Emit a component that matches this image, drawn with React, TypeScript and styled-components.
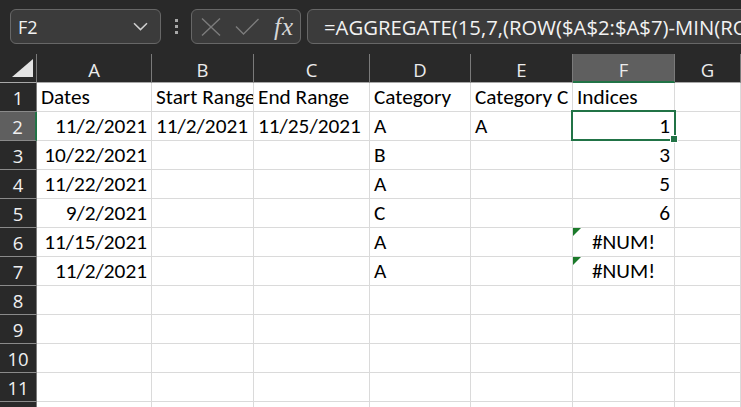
import React from "react";
import styled, { createGlobalStyle } from "styled-components";

const GlobalStyle = createGlobalStyle`
    html, body {
        margin: 0;
        padding: 0;
        background: #292929;
        overflow: hidden;
    }
    * {
        box-sizing: border-box;
    }
`;

const UI_FONT = `"Open Sans", "Noto Sans", sans-serif`;
const CELL_FONT = `Carlito, Lato, "Open Sans", sans-serif`;

const SWindow = styled.div`
    width: 741px;
    height: 407px;
    overflow: hidden;
    background: #292929;
`;

const SFormulaBar = styled.div`
    display: flex;
    align-items: flex-start;
    height: 54px;
    padding: 9px 0 0 10px;
`;

const SBox = styled.div`
    display: flex;
    flex-shrink: 0;
    align-items: center;
    height: 35px;
    border: 1px solid #676767;
    border-radius: 6px;
    background: #3b3b3b;
    color: #f2f2f2;
    font-family: ${UI_FONT};
    font-size: 18px;
`;

const SNameBox = styled(SBox)`
    width: 151px;
    justify-content: space-between;
    padding: 0 12px 0 7px;
`;

const SGrip = styled.div`
    flex-shrink: 0;
    width: 30px;
    height: 35px;
    display: flex;
    flex-direction: column;
    align-items: center;
    justify-content: center;
    gap: 3px;

    span {
        width: 3px;
        height: 3px;
        background: #a8a8a8;
    }
`;

const SFxBox = styled(SBox)`
    width: 110px;
    padding: 0 6px 0 9px;
    gap: 14px;
`;

const SFx = styled.span`
    font-family: "Liberation Serif", "DejaVu Serif", serif;
    font-style: italic;
    font-size: 25px;
    line-height: 1;
    color: #d6d6d6;
    margin-left: auto;
    letter-spacing: 1px;
`;

const SFormulaBox = styled(SBox)`
    width: 470px;
    margin-left: 6px;
    padding-left: 16px;
    white-space: nowrap;
    overflow: hidden;
    font-size: 20.3px;
`;

const COLS = [115, 102, 116, 101, 102, 102];

const SSheet = styled.div`
    display: grid;
    grid-template-columns: 37px ${COLS.map((w) => `${w}px`).join(" ")} 1fr;
    grid-auto-rows: 29px;
`;

const SCorner = styled.div`
    background: #292929;
    border-right: 1px solid #7a7a7a;
    border-bottom: 1px solid #a8a8a8;
    display: flex;
    align-items: flex-end;
    justify-content: flex-end;
    padding: 0 3px 5px 0;
`;

const SColHead = styled.div<{ $active?: boolean }>`
    display: flex;
    align-items: center;
    justify-content: center;
    padding-top: 3px;
    background: ${(p) => (p.$active ? "#5f5f5f" : "#292929")};
    border-right: 1px solid #7a7a7a;
    border-bottom: ${(p) => (p.$active ? "2px solid #217346" : "1px solid #a8a8a8")};
    color: #ececec;
    font-family: ${UI_FONT};
    font-size: 18.5px;
`;

const SRowHead = styled.div<{ $active?: boolean }>`
    display: flex;
    align-items: center;
    justify-content: center;
    background: ${(p) => (p.$active ? "#5f5f5f" : "#292929")};
    border-right: ${(p) => (p.$active ? "2px solid #217346" : "1px solid #7a7a7a")};
    border-bottom: 1px solid #8a8a8a;
    color: #f0f0f0;
    font-family: ${UI_FONT};
    font-size: 18.5px;
`;

const SCell = styled.div<{ $align?: "left" | "right" | "center" }>`
    position: relative;
    background: #ffffff;
    border-right: 1px solid #dadada;
    border-bottom: 1px solid #dadada;
    padding: 0 4px 0 4px;
    line-height: 28px;
    font-family: ${CELL_FONT};
    font-size: 21.3px;
    color: #000;
    white-space: nowrap;
    overflow: hidden;
    text-align: ${(p) => p.$align || "left"};
`;

const SSelection = styled.div`
    position: absolute;
    left: -2px;
    top: -2px;
    right: -2px;
    bottom: -1px;
    border: 2px solid #217346;
    pointer-events: none;

    &::after {
        content: "";
        position: absolute;
        right: -4px;
        bottom: -4px;
        width: 6px;
        height: 6px;
        background: #217346;
        border: 1px solid #ffffff;
    }
`;

const SErrorFlag = styled.span`
    position: absolute;
    left: 0;
    top: 0;
    width: 0;
    height: 0;
    border-top: 8px solid #1b7a2a;
    border-right: 8px solid transparent;
`;

const SActiveWrap = styled.div`
    position: relative;
    overflow: visible;
    z-index: 2;
`;

type Align = "left" | "right" | "center";
interface ICell {
    text?: string;
    align?: Align;
    error?: boolean;
}

const r = (text: string): ICell => ({ text, align: "right" });
const l = (text: string): ICell => ({ text, align: "left" });
const e: ICell = {};
const err: ICell = { text: "#NUM!", align: "center", error: true };
const blank: ICell[] = [e, e, e, e, e, e, e];

const ROWS: ICell[][] = [
    [l("Dates"), l("Start Range"), l("End Range"), l("Category"), l("Category C"), l("Indices"), e],
    [r("11/2/2021"), l("11/2/2021"), l("11/25/2021"), l("A"), l("A"), r("1"), e],
    [r("10/22/2021"), e, e, l("B"), e, r("3"), e],
    [r("11/22/2021"), e, e, l("A"), e, r("5"), e],
    [r("9/2/2021"), e, e, l("C"), e, r("6"), e],
    [r("11/15/2021"), e, e, l("A"), e, err, e],
    [r("11/2/2021"), e, e, l("A"), e, err, e],
    blank,
    blank,
    blank,
    blank,
];

const LETTERS = ["A", "B", "C", "D", "E", "F", "G"];
const ACTIVE_ROW = 1;
const ACTIVE_COL = 5;

const Chevron = () => (
    <svg width="15" height="9" viewBox="0 0 15 9">
        <path d="M1 1.2 L7.5 7.6 L14 1.2" fill="none" stroke="#cfcfcf" strokeWidth="1.5" />
    </svg>
);

const Cross = () => (
    <svg width="20" height="18" viewBox="0 0 20 18">
        <path d="M1 0.5 L19 17.5 M19 0.5 L1 17.5" stroke="#7c7c7c" strokeWidth="1.4" fill="none" />
    </svg>
);

const Check = () => (
    <svg width="24" height="17" viewBox="0 0 24 17">
        <path d="M1 8.5 L8.5 16 L23.5 1" stroke="#7c7c7c" strokeWidth="1.4" fill="none" />
    </svg>
);

const CornerMark = () => (
    <svg width="21" height="18" viewBox="0 0 21 18">
        <polygon points="21,0 21,18 0,18" fill="#e3e3e3" />
    </svg>
);

const App: React.FC = () => {
    return (
        <SWindow>
            <GlobalStyle />
            <SFormulaBar>
                <SNameBox>
                    <span>F2</span>
                    <Chevron />
                </SNameBox>
                <SGrip>
                    <span />
                    <span />
                    <span />
                </SGrip>
                <SFxBox>
                    <Cross />
                    <Check />
                    <SFx>fx</SFx>
                </SFxBox>
                <SFormulaBox>=AGGREGATE(15,7,(ROW($A$2:$A$7)-MIN(ROW($A$2:$A$7))+1)</SFormulaBox>
            </SFormulaBar>
            <SSheet>
                <SCorner>
                    <CornerMark />
                </SCorner>
                {LETTERS.map((letter, i) => (
                    <SColHead key={letter} $active={i === ACTIVE_COL}>
                        {letter}
                    </SColHead>
                ))}
                {ROWS.map((row, ri) => (
                    <React.Fragment key={ri}>
                        <SRowHead $active={ri === ACTIVE_ROW}>{ri + 1}</SRowHead>
                        {row.map((cell, ci) => {
                            const active = ri === ACTIVE_ROW && ci === ACTIVE_COL;
                            return (
                                <SCell key={ci} $align={cell.align} as={active ? SActiveWrap : undefined}>
                                    {cell.error && <SErrorFlag />}
                                    {cell.text}
                                    {active && <SSelection />}
                                </SCell>
                            );
                        })}
                    </React.Fragment>
                ))}
                {/* row 12 peeks in under the window edge */}
                <SRowHead />
                {blank.map((_, ci) => (
                    <SCell key={ci} />
                ))}
            </SSheet>
        </SWindow>
    );
};

export default App;
